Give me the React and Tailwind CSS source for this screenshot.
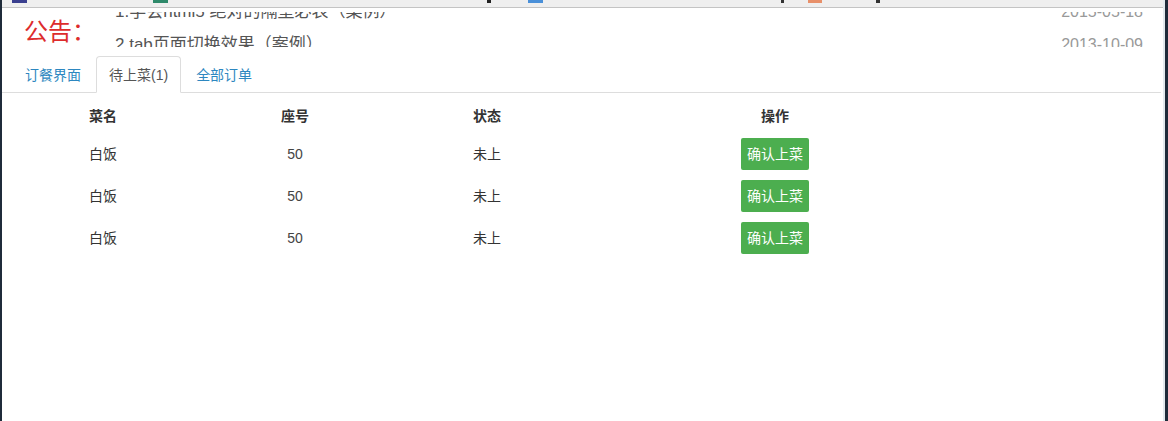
import React, { useState } from 'react';

const notices = [
  { title: '1.学会html5 绝对的隔壁必表（案例）', date: '2015-05-18' },
  { title: '2.tab页面切换效果（案例）', date: '2013-10-09' },
];

const orders = [
  { name: '白饭', seat: 50, status: '未上' },
  { name: '白饭', seat: 50, status: '未上' },
  { name: '白饭', seat: 50, status: '未上' },
];

const tabs = ['订餐界面', '待上菜(1)', '全部订单'];

// clipped favicons of the browser tab strip above the page
const favicons = [
  { left: 'ml-[10px]', w: 'w-[15px]', color: 'bg-[#3a3f8f]' },
  { left: 'ml-[126px]', w: 'w-[15px]', color: 'bg-[#2f8a6b]' },
  { left: 'ml-[319px]', w: 'w-[4px]', color: 'bg-[#222]' },
  { left: 'ml-[37px]', w: 'w-[15px]', color: 'bg-[#4a90d9]' },
  { left: 'ml-[238px]', w: 'w-[3px]', color: 'bg-[#333]' },
  { left: 'ml-[24px]', w: 'w-[14px]', color: 'bg-[#e8906a]' },
  { left: 'ml-[54px]', w: 'w-[4px]', color: 'bg-[#333]' },
];

const App = () => {
  const [active, setActive] = useState(1);

  return (
    <div
      className="flex h-[421px] w-full bg-white text-[14px] text-[#333]"
      style={{ fontFamily: '"Liberation Sans", "Noto Sans CJK SC", sans-serif' }}
    >
      {/* left window edge */}
      <div className="w-[2px] bg-[#1f2b3a]" />

      <div className="flex flex-1 flex-col overflow-hidden">
        {/* browser tab strip, mostly cut off */}
        <div className="flex h-[8px] items-start border-b border-[#c4c4c4] bg-[#efefef]">
          {favicons.map((f, i) => (
            <div key={i} className={`h-[3px] ${f.left} ${f.w} ${f.color}`} />
          ))}
        </div>

        {/* 公告 */}
        <div className="flex h-[48px]">
          <div
            className="flex w-[113px] items-center pl-[22px] text-[24px] leading-none text-[#dd2c2c]"
            style={{ fontFamily: '"Liberation Serif", "Noto Sans CJK SC", serif' }}
          >
            公告：
          </div>
          <div className="mt-[4px] mr-[20px] h-[35px] flex-1 overflow-hidden">
            <div className="-mt-[17px]">
              {notices.map((n) => (
                <div key={n.date} className="flex h-[33px] items-center justify-between">
                  <span className="text-[17px] text-[#555]">{n.title}</span>
                  <span className="text-[16px] text-[#999]">{n.date}</span>
                </div>
              ))}
            </div>
          </div>
        </div>

        {/* tabs */}
        <div className="mr-[2px] flex h-[37px] border-b border-[#ddd] pl-[10px]">
          {tabs.map((t, i) => (
            <button
              key={t}
              onClick={() => setActive(i)}
              className={`-mb-px mr-[2px] h-[37px] rounded-t-[4px] border px-3 py-2 leading-[20px] ${
                active === i
                  ? 'border-[#ddd] border-b-white bg-white text-[#555]'
                  : 'border-transparent text-[#2d87c0]'
              }`}
            >
              {t}
            </button>
          ))}
        </div>

        {/* table */}
        <div className="mt-[7px] pl-[79px]">
          <div className="flex h-[33px] items-center font-bold">
            <div className="w-[44px] px-2">菜名</div>
            <div className="w-[340px] text-center">座号</div>
            <div className="w-[200px] px-2">状态</div>
            <div className="w-[220px] text-center">操作</div>
          </div>
          {orders.map((o, i) => (
            <div key={i} className="flex h-[42px] items-center">
              <div className="w-[44px] whitespace-nowrap px-2">{o.name}</div>
              <div className="w-[340px] text-center text-[#444]">{o.seat}</div>
              <div className="w-[200px] px-2">{o.status}</div>
              <div className="flex w-[220px] justify-center">
                <button className="h-[32px] rounded-[2px] bg-[#4cae4f] px-[6px] text-white">
                  确认上菜
                </button>
              </div>
            </div>
          ))}
        </div>
      </div>

      {/* right window edge */}
      <div className="w-[2px] bg-[#e3eaee]" />
      <div className="w-[3px] bg-[#1f2b3a]" />
    </div>
  );
};

export default App;
